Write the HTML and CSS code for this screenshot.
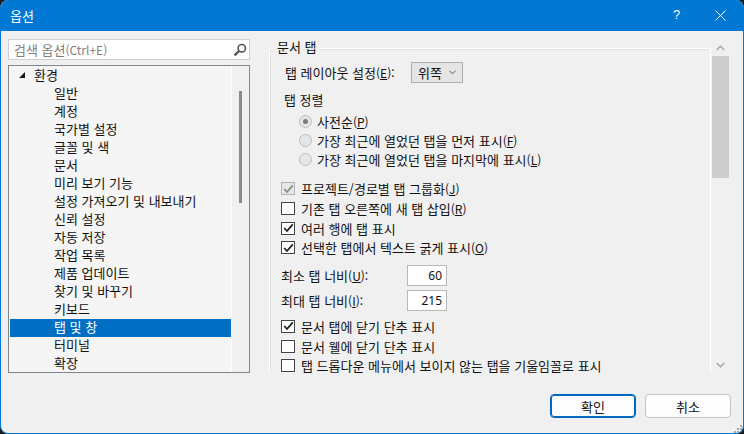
FILE: index.html
```html
<!DOCTYPE html>
<html lang="ko">
<head>
<meta charset="utf-8">
<title>옵션</title>
<link rel="stylesheet" href="styles.css">
</head>
<body>
<div class="window">
  <header class="titlebar">
    <span class="title">옵션</span>
    <span class="help">?</span>
    <svg class="close" width="11" height="11" viewBox="0 0 11 11"><path d="M.5.5l10 10M10.5.5l-10 10" stroke="#fff" stroke-width="1" fill="none"/></svg>
  </header>
  <div class="content">
    <aside class="left">
      <div class="search">
        <span class="search-text">검색 옵션<span class="l">(Ctrl+E)</span></span>
        <svg class="search-icon" width="14" height="14" viewBox="0 0 14 14"><circle cx="8.8" cy="5.2" r="3.7" fill="none" stroke="#555" stroke-width="1.6"/><path d="M6 8L1.6 12.4" stroke="#555" stroke-width="2.4" fill="none"/></svg>
      </div>
      <div class="tree">
        <div class="tree-list">
          <div class="node root"><span class="tri"></span>환경</div>
          <div class="node">일반</div>
          <div class="node">계정</div>
          <div class="node">국가별 설정</div>
          <div class="node">글꼴 및 색</div>
          <div class="node">문서</div>
          <div class="node">미리 보기 기능</div>
          <div class="node">설정 가져오기 및 내보내기</div>
          <div class="node">신뢰 설정</div>
          <div class="node">자동 저장</div>
          <div class="node">작업 목록</div>
          <div class="node">제품 업데이트</div>
          <div class="node">찾기 및 바꾸기</div>
          <div class="node">키보드</div>
          <div class="node selected">탭 및 창</div>
          <div class="node">터미널</div>
          <div class="node">확장</div>
        </div>
        <div class="tree-scroll"><div class="tree-thumb"></div></div>
      </div>
    </aside>
    <main class="right">
      <section class="group">
        <span class="legend">문서 탭</span>
        <div class="group-body">
          <div class="layout-row">
            <span class="layout-label">탭 레이아웃 설정<span class="l">(<u>E</u>):</span></span>
            <span class="combo">위쪽<svg width="7" height="5" viewBox="0 0 7 5"><path d="M.5.8l3 3 3-3" fill="none" stroke="#555" stroke-width="1"/></svg></span>
          </div>
          <div class="sort-title">탭 정렬</div>
          <div class="radios">
            <div class="opt"><span class="radio on"></span>사전순<span class="l">(<u>P</u>)</span></div>
            <div class="opt"><span class="radio"></span>가장 최근에 열었던 탭을 먼저 표시<span class="l">(<u>F</u>)</span></div>
            <div class="opt"><span class="radio"></span>가장 최근에 열었던 탭을 마지막에 표시<span class="l">(<u>L</u>)</span></div>
          </div>
          <div class="checks first">
            <div class="chk-row"><span class="chk disabled"><svg width="11" height="10" viewBox="0 0 11 10"><path d="M1.2 5l2.8 3L9.8 1.4" fill="none" stroke="#8a8a8a" stroke-width="1.8"/></svg></span>프로젝트/경로별 탭 그룹화<span class="l">(<u>J</u>)</span></div>
            <div class="chk-row"><span class="chk"></span>기존 탭 오른쪽에 새 탭 삽입<span class="l">(<u>R</u>)</span></div>
            <div class="chk-row"><span class="chk"><svg width="11" height="10" viewBox="0 0 11 10"><path d="M1.2 5l2.8 3L9.8 1.4" fill="none" stroke="#222" stroke-width="1.8"/></svg></span>여러 행에 탭 표시</div>
            <div class="chk-row"><span class="chk"><svg width="11" height="10" viewBox="0 0 11 10"><path d="M1.2 5l2.8 3L9.8 1.4" fill="none" stroke="#222" stroke-width="1.8"/></svg></span>선택한 탭에서 텍스트 굵게 표시<span class="l">(<u>O</u>)</span></div>
          </div>
          <div class="widths">
            <div class="width-row"><span class="width-label">최소 탭 너비<span class="l">(<u>U</u>):</span></span><span class="num">60</span></div>
            <div class="width-row"><span class="width-label">최대 탭 너비<span class="l">(<u>I</u>):</span></span><span class="num">215</span></div>
          </div>
          <div class="checks second">
            <div class="chk-row"><span class="chk"><svg width="11" height="10" viewBox="0 0 11 10"><path d="M1.2 5l2.8 3L9.8 1.4" fill="none" stroke="#222" stroke-width="1.8"/></svg></span>문서 탭에 닫기 단추 표시</div>
            <div class="chk-row"><span class="chk"></span>문서 웰에 닫기 단추 표시</div>
            <div class="chk-row"><span class="chk"></span>탭 드롭다운 메뉴에서 보이지 않는 탭을 기울임꼴로 표시</div>
          </div>
        </div>
      </section>
      <div class="scrollbar">
        <svg class="arrow" width="9" height="6" viewBox="0 0 9 6"><path d="M.7 5L4.5 1.2 8.3 5" fill="none" stroke="#a6a6a6" stroke-width="1.4"/></svg>
        <div class="thumb"></div>
        <svg class="arrow down" width="9" height="6" viewBox="0 0 9 6"><path d="M.7 1l3.8 3.8L8.3 1" fill="none" stroke="#a6a6a6" stroke-width="1.4"/></svg>
      </div>
    </main>
  </div>
  <footer class="footer">
    <button class="btn primary">확인</button>
    <button class="btn">취소</button>
    <svg class="grip" width="9" height="9" viewBox="0 0 9 9"><path d="M6 0h2v2H6zM3 3h2v2H3zM6 3h2v2H6zM0 6h2v2H0zM3 6h2v2H3zM6 6h2v2H6z" fill="#a8a8a8"/></svg>
  </footer>
</div>
</body>
</html>
```
FILE: styles.css
```css
* { box-sizing: border-box; }
html, body { margin: 0; padding: 0; background: #1c1c1c; }
body { width: 744px; height: 434px; overflow: hidden; font-family: "Noto Sans CJK KR", "Noto Sans", sans-serif; font-size: 13px; color: #111; }
.l { font-size: 12px; }
u { text-decoration-thickness: 1px; text-underline-offset: 1px; }
.window { width: 744px; height: 434px; background: #f0f0f0; border: 1px solid #0078d4; border-top: 0; border-radius: 8px; overflow: hidden; display: flex; flex-direction: column; }
.titlebar { height: 31px; flex: none; background: #0078d4; color: #fff; display: flex; align-items: center; padding-left: 9px; }
.title { flex: 1; line-height: 16px; }
.help { width: 14px; font-size: 13px; line-height: 16px; font-family: "Liberation Sans", sans-serif; margin-right: 28px; margin-top: -1px; }
.close { margin-right: 17px; margin-top: -1px; }
.content { height: 343px; flex: none; display: flex; padding: 8px 0 0 7px; }
.left { width: 242px; flex: none; display: flex; flex-direction: column; gap: 5px; }
.search { height: 21px; background: #fff; border: 1px solid #ccced8; display: flex; align-items: center; justify-content: space-between; padding: 0 2px 0 5px; }
.search-text { color: #7f7f7f; line-height: 16px; }
.search-icon { flex: none; }
.tree { height: 308px; border: 1px solid #82878c; background: #f5f5f5; display: flex; overflow: hidden; }
.tree-list { width: 222px; flex: none; padding: 1px 0 0 1px; overflow: hidden; background: #f5f5f5; }
.node { height: 18px; line-height: 16px; padding-left: 44px; white-space: nowrap; }
.node.root { padding-left: 9px; padding-bottom: 2px; display: flex; align-items: center; }
.tri { width: 0; height: 0; border-style: solid; border-width: 0 0 6px 6px; border-color: transparent transparent #1a1a1a transparent; margin-right: 9px; }
.node.selected { background: #006fc3; color: #fff; }
.tree-scroll { flex: 1; border-left: 1px solid #fff; background: #f0f0f0; padding: 25px 0 0 7px; }
.tree-thumb { width: 3px; height: 112px; background: #8a8a8a; }
.right { margin-left: 19px; display: flex; flex: none; width: 460px; height: 334px; }
.group { position: relative; width: 442px; height: 325px; margin-top: 9px; border: 1px solid #fff; border-bottom: 0; border-radius: 2px 2px 0 0; box-shadow: inset 1px 1px 0 #e2e2e2; flex: none; }
.legend { position: absolute; left: 4px; top: -10px; padding: 0 3px; background: #f0f0f0; line-height: 16px; }
.group-body { height: 324px; overflow: hidden; }
.layout-row { display: flex; align-items: center; padding: 13px 0 0 15px; height: 34px; }
.layout-label { width: 126px; flex: none; white-space: nowrap; }
.combo { width: 52px; height: 21px; border: 1px solid #adadad; background: #e5e5e5; display: flex; align-items: center; justify-content: space-between; padding: 0 6px; }
.sort-title { margin: 8px 0 0 14px; line-height: 18px; height: 18px; }
.radios { margin-top: 3px; padding-left: 29px; }
.opt { height: 19px; display: flex; align-items: center; white-space: pre; }
.radio { width: 13px; height: 13px; flex: none; border-radius: 50%; border: 1px solid #bcbcbc; background: #e6e6e6; margin-right: 5px; display: flex; align-items: center; justify-content: center; }
.radio.on::after { content: ""; width: 5px; height: 5px; border-radius: 50%; background: #7a7a7a; }
.checks { padding-left: 11px; }
.checks.first { margin-top: 10px; }
.checks.second { margin-top: 6px; }
.chk-row { height: 19.67px; display: flex; align-items: center; white-space: nowrap; }
.chk { width: 14px; height: 13px; flex: none; border: 1px solid #444; background: #fff; margin-right: 6px; display: flex; align-items: center; justify-content: center; }
.chk.disabled { border-color: #b4b4b4; background: #e6e6e6; }
.widths { margin-top: 7px; padding-left: 11px; display: flex; flex-direction: column; gap: 4px; }
.width-row { display: flex; align-items: center; height: 21px; }
.width-label { width: 126px; flex: none; }
.num { width: 40px; height: 21px; background: #fff; border: 1px solid #b8b8b8; text-align: right; padding-right: 4px; line-height: 19px; font-family: "Noto Sans", sans-serif; font-size: 12px; }
.scrollbar { width: 17px; margin-left: 1px; display: flex; flex-direction: column; align-items: center; padding-top: 6px; }
.arrow { flex: none; }
.arrow.down { margin-top: 184px; }
.thumb { width: 17px; height: 122px; background: #cdcdcd; margin-top: 5px; flex: none; }
.footer { position: relative; height: 60px; flex: none; display: flex; justify-content: flex-end; gap: 9px; padding: 20px 12px 0 0; }
.btn { width: 86px; height: 24px; font: inherit; color: #111; background: #fdfdfd; border: 1px solid #c4c4c4; border-radius: 4px; padding: 0; }
.btn.primary { border-color: #0067c0; box-shadow: inset 0 0 0 1px #0067c0; background: #fdfdfd; }
.grip { position: absolute; right: 0; bottom: 0; }
```
